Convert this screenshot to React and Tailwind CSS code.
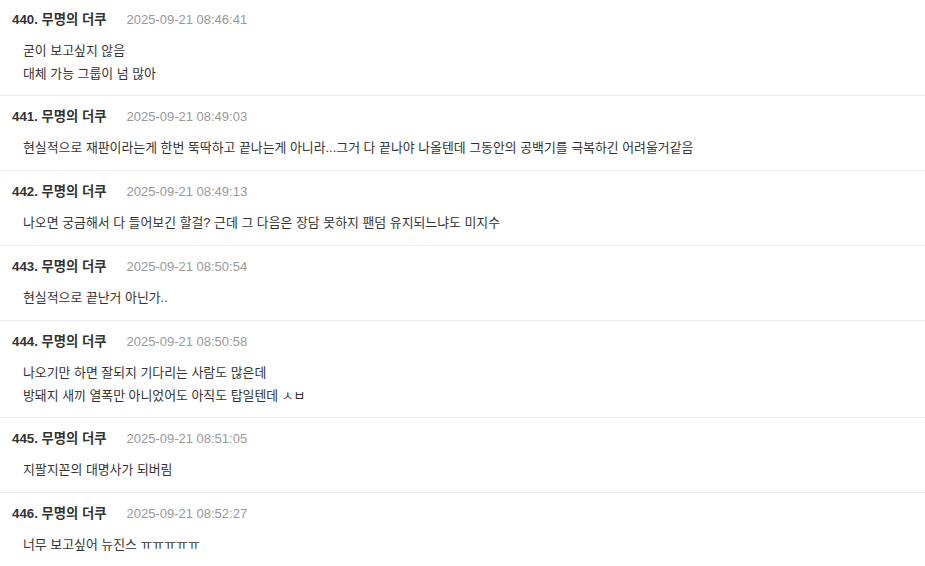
const comments = [
  { no: 440, date: "2025-09-21 08:46:41", lines: ["굳이 보고싶지 않음", "대체 가능 그룹이 넘 많아"] },
  { no: 441, date: "2025-09-21 08:49:03", lines: ["현실적으로 재판이라는게 한번 뚝딱하고 끝나는게 아니라...그거 다 끝나야 나올텐데 그동안의 공백기를 극복하긴 어려울거같음"] },
  { no: 442, date: "2025-09-21 08:49:13", lines: ["나오면 궁금해서 다 들어보긴 할걸? 근데 그 다음은 장담 못하지 팬덤 유지되느냐도 미지수"] },
  { no: 443, date: "2025-09-21 08:50:54", lines: ["현실적으로 끝난거 아닌가.."] },
  { no: 444, date: "2025-09-21 08:50:58", lines: ["나오기만 하면 잘되지 기다리는 사람도 많은데", "방돼지 새끼 열폭만 아니었어도 아직도 탑일텐데 ㅅㅂ"] },
  { no: 445, date: "2025-09-21 08:51:05", lines: ["지팔지꼰의 대명사가 되버림"] },
  { no: 446, date: "2025-09-21 08:52:27", lines: ["너무 보고싶어 뉴진스 ㅠㅠㅠㅠㅠ"] },
];

/* ================= COMMENT ================= */
function Comment({ c, first }) {
  const multi = c.lines.length > 1;
  return (
    <div className={(first ? "pt-[11px] " : "pt-[12px] border-t border-[#ebebeb] ") + (multi ? "px-3 pb-[10px]" : "px-3 pb-[11px]")}>
      <div className="flex items-center h-[18px]">
        <span className="text-[13.3px] font-bold text-[#333]">{c.no}. 무명의 더쿠</span>
        <span className="ml-5 text-[13px] text-[#999]">{c.date}</span>
      </div>
      <div className="mt-[10px] pl-[11px] text-[12.9px] leading-[23px] text-[#333]">
        {c.lines.map((l, i) => (
          <div key={i}>{l}</div>
        ))}
      </div>
    </div>
  );
}

export default function App() {
  return (
    <div className="w-[925px] h-[566px] overflow-hidden bg-white" style={{ fontFamily: '"Liberation Sans", "Noto Sans CJK KR", sans-serif' }}>
      {comments.map((c, i) => (
        <Comment key={c.no} c={c} first={i === 0} />
      ))}
    </div>
  );
}
